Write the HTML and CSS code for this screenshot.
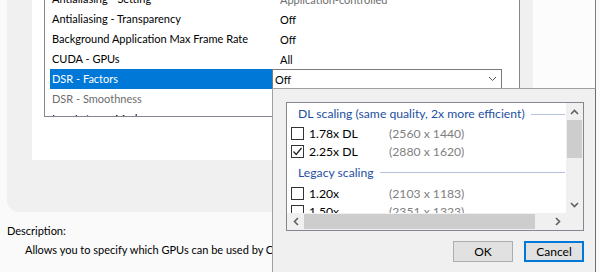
FILE: index.html
```html
<html lang="en">
<head>
<title>Manage 3D settings</title>
<meta name="viewport" content="width=device-width, initial-scale=1">
<link rel="stylesheet" href="styles.css">
</head>
<body>

<div class="screen">
  <div class="panel">
    <div class="page">
      <div class="settings">
        <div class="row"><span class="name">Antialiasing - Setting</span><span class="value muted">Application-controlled</span></div>
        <div class="row"><span class="name">Antialiasing - Transparency</span><span class="value">Off</span></div>
        <div class="row"><span class="name">Background Application Max Frame Rate</span><span class="value">Off</span></div>
        <div class="row"><span class="name">CUDA - GPUs</span><span class="value">All</span></div>
        <div class="row selected">
          <span class="name">DSR - Factors</span>
          <div class="combo">
            <span>Off</span>
            <svg class="combo-arrow" width="9" height="6" viewBox="0 0 9 6"><polyline points="1,1 4.5,4.5 8,1" fill="none" stroke="#555" stroke-width="1"/></svg>
          </div>
        </div>
        <div class="row"><span class="name muted">DSR - Smoothness</span><span class="value"></span></div>
        <div class="row"><span class="name">Low Latency Mode</span><span class="value">Off</span></div>
      </div>
    </div>
  </div>
  <div class="side"></div>
</div>

<div class="description">
  <p class="desc-label">Description:</p>
  <p class="desc-text">Allows you to specify which GPUs can be used by CUDA applications.</p>
</div>

<!-- dropdown of the DSR - Factors combo, lies over the page -->
<div class="popup">
  <div class="factor-box">
    <div class="factor-list">
      <div class="group"><span>DL scaling (same quality, 2x more efficient)</span><i class="rule"></i></div>
      <div class="factor"><span class="check"></span><span class="label">1.78x DL</span><span class="res">(2560 x 1440)</span></div>
      <div class="factor"><span class="check">
        <svg width="11" height="11" viewBox="0 0 11 11"><polyline points="1.5,5.5 4.2,8.5 9.5,2" fill="none" stroke="#222" stroke-width="1.2"/></svg>
      </span><span class="label">2.25x DL</span><span class="res">(2880 x 1620)</span></div>
      <div class="group legacy"><span>Legacy scaling</span><i class="rule"></i></div>
      <div class="factor"><span class="check"></span><span class="label">1.20x</span><span class="res">(2103 x 1183)</span></div>
      <div class="factor"><span class="check"></span><span class="label">1.50x</span><span class="res">(2351 x 1323)</span></div>
    </div>
    <div class="vscroll">
      <div class="arrow-btn"><svg width="9" height="6" viewBox="0 0 9 6"><polyline points="1,5 4.5,1.5 8,5" fill="none" stroke="#606060" stroke-width="1.6"/></svg></div>
      <div class="vthumb"></div>
      <div class="track"></div>
      <div class="arrow-btn"><svg width="9" height="6" viewBox="0 0 9 6"><polyline points="1,1 4.5,4.5 8,1" fill="none" stroke="#606060" stroke-width="1.6"/></svg></div>
    </div>
    <div class="hscroll">
      <div class="arrow-btn"><svg width="6" height="9" viewBox="0 0 6 9"><polyline points="5,1 1.5,4.5 5,8" fill="none" stroke="#606060" stroke-width="1.6"/></svg></div>
      <div class="hthumb"></div>
      <div class="track"></div>
      <div class="arrow-btn"><svg width="6" height="9" viewBox="0 0 6 9"><polyline points="1,1 4.5,4.5 1,8" fill="none" stroke="#606060" stroke-width="1.6"/></svg></div>
    </div>
    <div class="corner"></div>
  </div>
  <div class="buttons">
    <button class="btn">OK</button>
    <button class="btn default">Cancel</button>
  </div>
</div>

</body>
</html>
```

FILE: styles.css
```css
body {
  margin: 0;
  width: 600px;
  height: 272px;
  overflow: hidden;
  position: relative;
  background-color: #fafafa;
  font-family: Lato, "Noto Sans", sans-serif;
  font-size: 11px;
  color: #000;
}

.screen {
  display: flex;
  height: 212px;
}

.panel {
  margin-left: 7px;
  width: 526px;
  padding-left: 25px;
  padding-right: 13px;
  box-sizing: border-box;
  background-color: #f0f0f0;
  border-bottom-left-radius: 12px;
}

.page {
  height: 160px;
  padding-left: 12px;
  background-color: #fff;
  overflow: hidden;
}

.settings {
  margin-top: -12px;
  height: 129px;
  box-sizing: border-box;
  border: 1px solid #828790;
  overflow: hidden;
}

.row {
  display: flex;
  align-items: center;
  height: 20px;
  margin-left: 5px;
  white-space: nowrap;
}

.name {
  width: 222px;
  padding-left: 2px;
  box-sizing: border-box;
  line-height: 20px;
}

.value {
  padding-left: 8px;
}

.muted {
  color: #6d6d6d;
}

.selected .name {
  background-color: #0078d7;
  color: #fff;
}

.combo {
  display: flex;
  align-items: center;
  justify-content: space-between;
  width: 230px;
  height: 20px;
  box-sizing: border-box;
  border: 1px solid #7a7a7a;
  padding-left: 2px;
  padding-right: 4px;
  background-color: #fff;
}

.side {
  width: 63px;
  border-right: 1px solid #7f7f7f;
  box-sizing: border-box;
  background-color: #fcfcfc;
}

.description p {
  margin: 0;
  line-height: 19px;
}

.desc-label {
  margin-top: 9px !important;
  padding-left: 7px;
}

.desc-text {
  padding-left: 25px;
  white-space: nowrap;
}

/* dropdown */
.popup {
  position: absolute;
  left: 272px;
  top: 88px;
  width: 324px;
  height: 190px;
  box-sizing: border-box;
  padding: 13px 11px 0 13px;
  background-color: #f0f0f0;
  border: 1px solid #a0a0a0;
  border-right-color: #6e6e6e;
  font-size: 12.2px;
}

.factor-box {
  display: grid;
  grid-template-columns: 279px 17px;
  grid-template-rows: 110px 17px;
  width: 298px;
  height: 129px;
  box-sizing: border-box;
  border: 1px solid #828790;
  background-color: #fff;
}

.factor-list {
  overflow: hidden;
  white-space: nowrap;
}

.group {
  display: flex;
  align-items: center;
  height: 21px;
  padding-left: 11px;
  color: #1e50a2;
}

.group.legacy {
  height: 24px;
}

.rule {
  flex: 1;
  height: 1px;
  margin: 1px 1px 0 6px;
  background-color: #b4c3dc;
}

.factor {
  display: flex;
  align-items: center;
  height: 18px;
  padding-left: 4px;
}

.check {
  display: flex;
  align-items: center;
  justify-content: center;
  width: 13px;
  height: 13px;
  box-sizing: border-box;
  border: 1px solid #333;
  background-color: #fff;
}

.label {
  width: 80px;
  padding-left: 5px;
}

.res {
  color: #808080;
}

.vscroll, .hscroll {
  display: flex;
  background-color: #f0f0f0;
}

.vscroll {
  flex-direction: column;
}

.arrow-btn {
  display: flex;
  align-items: center;
  justify-content: center;
  flex: 0 0 17px;
}

.vthumb {
  height: 38px;
  margin: 0 1px;
  background-color: #cdcdcd;
}

.hthumb {
  width: 231px;
  margin: 1px 0;
  background-color: #cdcdcd;
}

.track {
  flex: 1;
}

.corner {
  background-color: #f0f0f0;
}

.buttons {
  display: flex;
  justify-content: flex-end;
  gap: 11px;
  width: 298px;
  margin-top: 10px;
}

.btn {
  width: 60px;
  height: 21px;
  padding: 0;
  font-family: Lato, "Noto Sans", sans-serif;
  font-size: 12px;
  color: #000;
  background-color: #e1e1e1;
  border: 1px solid #adadad;
}

.btn.default {
  border: 2px solid #0078d7;
}
```
